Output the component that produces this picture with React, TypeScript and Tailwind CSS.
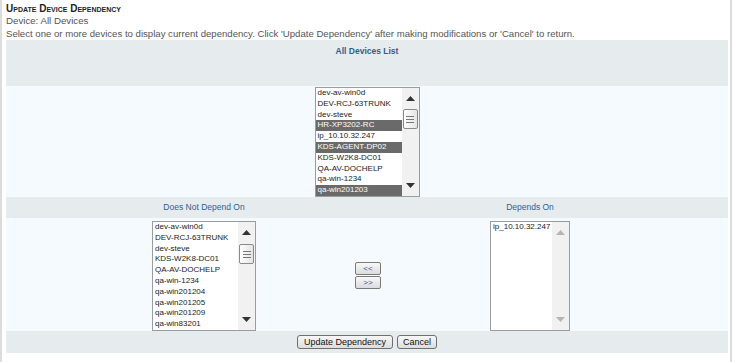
import React from "react";

const Arrow = ({ dir, disabled }: { dir: "up" | "down"; disabled?: boolean }) => (
  <svg width="9" height="5" viewBox="0 0 9 5" className="block">
    {dir === "up" ? (
      <polygon points="0,5 9,5 4.5,0" fill={disabled ? "#b5b5b5" : "#333333"} />
    ) : (
      <polygon points="0,0 9,0 4.5,5" fill={disabled ? "#b5b5b5" : "#333333"} />
    )}
  </svg>
);

const Scrollbar = ({ thumbTop, disabled }: { thumbTop?: number; disabled?: boolean }) => (
  <div className="relative w-[17px] h-full bg-[#f1f1f1] flex flex-col items-center justify-between py-[8px]">
    <Arrow dir="up" disabled={disabled} />
    <Arrow dir="down" disabled={disabled} />
    {thumbTop !== undefined && (
      <div
        className="absolute left-[1px] w-[15px] h-[20px] rounded-[2px] border border-[#8a8a8a] bg-gradient-to-r from-[#ffffff] to-[#e4e4e4] flex flex-col items-center justify-center gap-[2px]"
        style={{ top: thumbTop }}
      >
        <div className="w-[8px] h-[1px] bg-[#777]" />
        <div className="w-[8px] h-[1px] bg-[#777]" />
        <div className="w-[8px] h-[1px] bg-[#777]" />
      </div>
    )}
  </div>
);

type Item = { t: string; sel?: boolean };

const ListBox = ({
  items,
  widthClass,
  thumbTop,
  disabled,
}: {
  items: Item[];
  widthClass: string;
  thumbTop?: number;
  disabled?: boolean;
}) => (
  <div className={`${widthClass} h-[110px] border border-[#9c9c9c] bg-white flex`}>
    <div className="flex-1 overflow-hidden">
      {items.map((it, i) => (
        <div
          key={i}
          className={`h-[10.8px] leading-[10.8px] text-[8px] px-[2px] whitespace-nowrap ${
            it.sel ? "bg-[#6a6a6a] text-white" : "text-[#222]"
          }`}
        >
          {it.t}
        </div>
      ))}
    </div>
    <Scrollbar thumbTop={thumbTop} disabled={disabled} />
  </div>
);

const SmallBtn = ({ label }: { label: string }) => (
  <div className="w-[26px] h-[13px] border border-[#7a7a7a] rounded-[2px] bg-gradient-to-b from-[#f8f8f8] to-[#dcdcdc] flex items-center justify-center text-[8px] leading-none text-[#2a5a9a]">
    {label}
  </div>
);

export default function App() {
  const allDevices: Item[] = [
    { t: "dev-av-win0d" },
    { t: "DEV-RCJ-63TRUNK" },
    { t: "dev-steve" },
    { t: "HR-XP3202-RC", sel: true },
    { t: "ip_10.10.32.247" },
    { t: "KDS-AGENT-DP02", sel: true },
    { t: "KDS-W2K8-DC01" },
    { t: "QA-AV-DOCHELP" },
    { t: "qa-win-1234" },
    { t: "qa-win201203", sel: true },
  ];
  const notDepend: Item[] = [
    { t: "dev-av-win0d" },
    { t: "DEV-RCJ-63TRUNK" },
    { t: "dev-steve" },
    { t: "KDS-W2K8-DC01" },
    { t: "QA-AV-DOCHELP" },
    { t: "qa-win-1234" },
    { t: "qa-win201204" },
    { t: "qa-win201205" },
    { t: "qa-win201209" },
    { t: "qa-win83201" },
  ];
  const depends: Item[] = [{ t: "ip_10.10.32.247" }];

  return (
    <div className="w-[733px] h-[362px] bg-white font-['Liberation_Sans',Arial,sans-serif]">
      <div className="w-[732px] h-[362px] border-l-2 border-r-2 border-[#dcdcdc] pl-[4px] pr-[2px] pt-[3px]">
        <div className="text-[10px] leading-[12px] font-bold text-[#222] [font-variant:small-caps]">
          Update Device Dependency
        </div>
        <div className="text-[9.7px] leading-[12px] text-[#555]">Device: All Devices</div>
        <div className="text-[9.6px] leading-[13px] text-[#555] whitespace-nowrap">
          Select one or more devices to display current dependency. Click 'Update Dependency' after making
          modifications or 'Cancel' to return.
        </div>

        <div className="w-[722px]">
          <div className="h-[46px] bg-[#e6ebee] flex justify-center pt-[6px]">
            <span className="text-[8.5px] leading-[10px] font-bold text-[#2f5f91]">All Devices List</span>
          </div>
          <div className="h-[111px] bg-[#f5faff] flex justify-center pt-[1px]">
            <ListBox items={allDevices} widthClass="w-[105px]" thumbTop={21} />
          </div>
          <div className="h-[21px] bg-[#e6ebee] flex items-center">
            <div className="ml-[146px] w-[104px] text-center text-[8.5px] text-[#2f5f91]">Does Not Depend On</div>
            <div className="ml-[234px] w-[80px] text-center text-[8.5px] text-[#2f5f91]">Depends On</div>
          </div>
          <div className="h-[113px] bg-[#f5faff] flex items-start pt-[3px]">
            <div className="ml-[146px]">
              <ListBox items={notDepend} widthClass="w-[104px]" thumbTop={22} />
            </div>
            <div className="ml-[99px] mt-[41px] flex flex-col gap-[1px]">
              <SmallBtn label="<<" />
              <SmallBtn label=">>" />
            </div>
            <div className="ml-[109px]">
              <ListBox items={depends} widthClass="w-[80px]" disabled />
            </div>
          </div>
          <div className="h-[22px] bg-[#e6ebee] flex justify-center items-center gap-[4px]">
            <div className="h-[14px] px-[6px] border border-[#6f6f6f] rounded-[3px] bg-gradient-to-b from-[#f7f7f7] to-[#dddddd] text-[9px] leading-[12px] text-[#111]">
              Update Dependency
            </div>
            <div className="h-[14px] px-[5px] border border-[#6f6f6f] rounded-[3px] bg-gradient-to-b from-[#f7f7f7] to-[#dddddd] text-[9px] leading-[12px] text-[#111]">
              Cancel
            </div>
          </div>
        </div>
      </div>
    </div>
  );
}
